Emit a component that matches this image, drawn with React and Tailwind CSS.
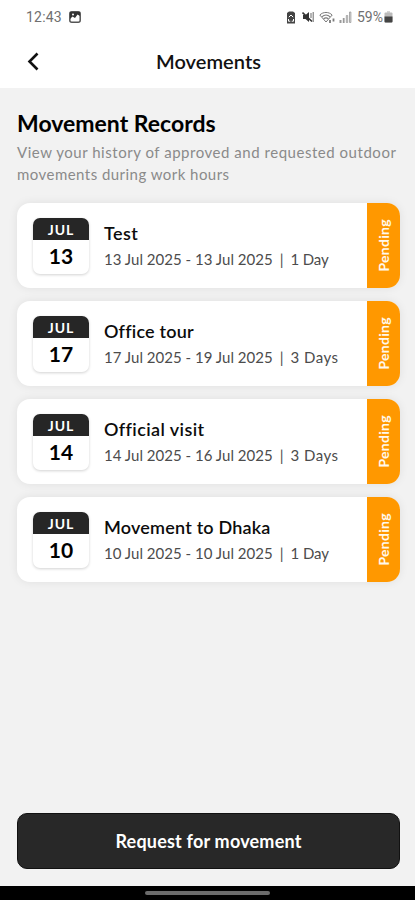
import clsx from "clsx";

const movements = [
  { id: 1, title: "Test", month: "JUL", day: "13", range: "13 Jul 2025 - 13 Jul 2025", total: "1 Day", titleClass: "tracking-[0.45px]", totalClass: "tracking-[-0.15px]" },
  { id: 2, title: "Office tour", month: "JUL", day: "17", range: "17 Jul 2025 - 19 Jul 2025", total: "3 Days", titleClass: "tracking-[0.2px]", totalClass: "tracking-[0.5px]" },
  { id: 3, title: "Official visit", month: "JUL", day: "14", range: "14 Jul 2025 - 16 Jul 2025", total: "3 Days", titleClass: "tracking-[0.4px]", totalClass: "tracking-[0.5px]" },
  { id: 4, title: "Movement to Dhaka", month: "JUL", day: "10", range: "10 Jul 2025 - 10 Jul 2025", total: "1 Day", titleClass: "tracking-[0.2px]", totalClass: "tracking-[-0.05px]" },
];

function StatusBar() {
  return (
    <div className="flex h-[34px] items-center justify-between pl-[26px] pr-[22px] font-['Roboto',sans-serif] text-[14px] text-[#707070]">
      <div className="flex items-center gap-[7px]">
        <span className="tracking-[0.2px]">12:43</span>
        <svg width="12" height="12" viewBox="0 0 12 12">
          <rect x="0.8" y="0.8" width="10.4" height="10.4" rx="2" fill="none" stroke="#555" strokeWidth="1.5" />
          <path d="M1 1h10v4L8.5 3.5 6 7 3.5 5.5 1 8z" fill="#333" />
          <circle cx="4" cy="3.5" r="1" fill="#fff" />
        </svg>
      </div>

      <div className="flex items-center">
        <svg width="10" height="13" viewBox="0 0 10 13" className="mr-[6px]">
          <path d="M3 0.5h4l2 1.5v10.5H1V2z" fill="#444" />
          <path d="M2.8 6.2 5 4l2.2 2.2M2.5 8v2.2h1.8M7.5 8v2.2H5.7" fill="none" stroke="#fff" strokeWidth="1" />
        </svg>
        <svg width="12" height="12" viewBox="0 0 12 12" className="mr-[5px]">
          <path d="M1 4h2.5L7 1v10L3.5 8H1z" fill="#333" />
          <path d="M0.5 1.5 10 10.5" stroke="#333" strokeWidth="1.6" />
          <path d="M9 2v5M11.2 1v10" stroke="#777" strokeWidth="1.1" />
        </svg>
        <svg width="17" height="13" viewBox="0 0 17 13" className="mr-[3px]" fill="none" stroke="#7a7a7a">
          <path d="M0.8 4C4.2.6 9.8.6 13.2 4L7 11z" strokeWidth="1" />
          <path d="M2.8 5.8c2.6-2.2 5.8-2.2 8.4 0M4.6 7.8c1.6-1.3 3.2-1.3 4.8 0" strokeWidth="1.1" />
          <path d="M11 9v3M14.5 7.5v3" strokeWidth="1.8" />
        </svg>
        <svg width="13" height="12" viewBox="0 0 13 12" className="mr-[5px]">
          <path d="M0.5 9h2v3h-2zM3.8 7h1.8v5H3.8z" fill="#999" />
          <path d="M7.3 4.5h1.4v7H7.3zM10.5 1h1.4v10.5h-1.4z" fill="#ddd" stroke="#999" strokeWidth="0.8" />
        </svg>
        <span>59%</span>
        <svg width="9" height="12" viewBox="0 0 9 12" className="ml-[1px]">
          <path d="M3 0.5h3v1H3z" fill="#aaa" />
          <rect x="0.5" y="1.5" width="8" height="10" rx="1" fill="#bbb" />
          <path d="M0.5 5.5h8v5a1 1 0 0 1-1 1h-6a1 1 0 0 1-1-1z" fill="#444" />
        </svg>
      </div>
    </div>
  );
}

function MovementCard({ item }) {
  return (
    <div className="flex h-[85px] overflow-hidden rounded-[13px] bg-white shadow-[0_0_10px_rgba(0,0,0,0.08)]">
      <div className="flex flex-1 items-center pl-4">
        <div className="h-[56px] w-[56px] overflow-hidden rounded-[7px] bg-white text-center shadow-[0_1px_3px_rgba(0,0,0,0.18)]">
          <div className="h-[22px] bg-[#262626] text-[14px] font-bold leading-[23px] tracking-[1px] text-white">
            {item.month}
          </div>
          <div className="text-[21px] font-bold leading-[32px] text-black">{item.day}</div>
        </div>

        <div className="ml-[15px] whitespace-nowrap pt-px">
          <p className={clsx("text-[18px] font-semibold leading-[26px] text-[#0c0c0c]", item.titleClass)}>
            {item.title}
          </p>
          <p className="text-[15px] leading-[26px] text-[#4c4c4c]">
            <span className="tracking-[0.02px]">{item.range}</span>
            <span className="mx-[7px]">|</span>
            <span className={item.totalClass}>{item.total}</span>
          </p>
        </div>
      </div>

      <div className="flex w-[33px] items-center justify-center bg-[#ff9800]">
        <span className="rotate-180 text-[14px] font-bold leading-none tracking-[0.3px] text-[#fff8ec] [writing-mode:vertical-rl]">
          Pending
        </span>
      </div>
    </div>
  );
}

export default function App() {
  return (
    <div className="flex h-[900px] w-[415px] flex-col overflow-hidden bg-[#f2f2f2] font-['Lato',sans-serif]">
      <div className="bg-white">
        <StatusBar />
        <header className="grid h-[54px] grid-cols-[1fr_auto_1fr] items-center pl-[26px] pr-[24px]">
          <svg width="14" height="20" viewBox="0 0 14 20" fill="none" stroke="#111" strokeWidth="2.6">
            <path d="M11.5 2.5 3.5 10.5l8 8" />
          </svg>
          <h1 className="text-[20px] font-semibold tracking-[0.05px] text-[#111]">Movements</h1>
        </header>
      </div>

      <main className="flex flex-1 flex-col pl-[17px] pr-[15px] pt-[20px]">
        <h2 className="whitespace-nowrap text-[23px] font-bold leading-[30px] text-black">Movement Records</h2>
        <div className="whitespace-nowrap pt-[3px] text-[15px] leading-[22px] text-[#8a8a8a]">
          <p className="tracking-[0.53px]">View your history of approved and requested outdoor</p>
          <p className="tracking-[0.46px]">movements during work hours</p>
        </div>

        <div className="mt-[18px] flex flex-col gap-[13px]">
          {movements.map((item) => (
            <MovementCard key={item.id} item={item} />
          ))}
        </div>

        <button className="mb-[17px] mt-auto h-[56px] w-full rounded-[10px] border border-[#111] bg-[#282828] text-[18px] font-bold tracking-[0.2px] text-white">
          Request for movement
        </button>
      </main>

      <div className="flex h-[14px] justify-center bg-black pt-[5px]">
        <div className="h-[4px] w-[125px] rounded-full bg-[#6b6b6b]" />
      </div>
    </div>
  );
}
